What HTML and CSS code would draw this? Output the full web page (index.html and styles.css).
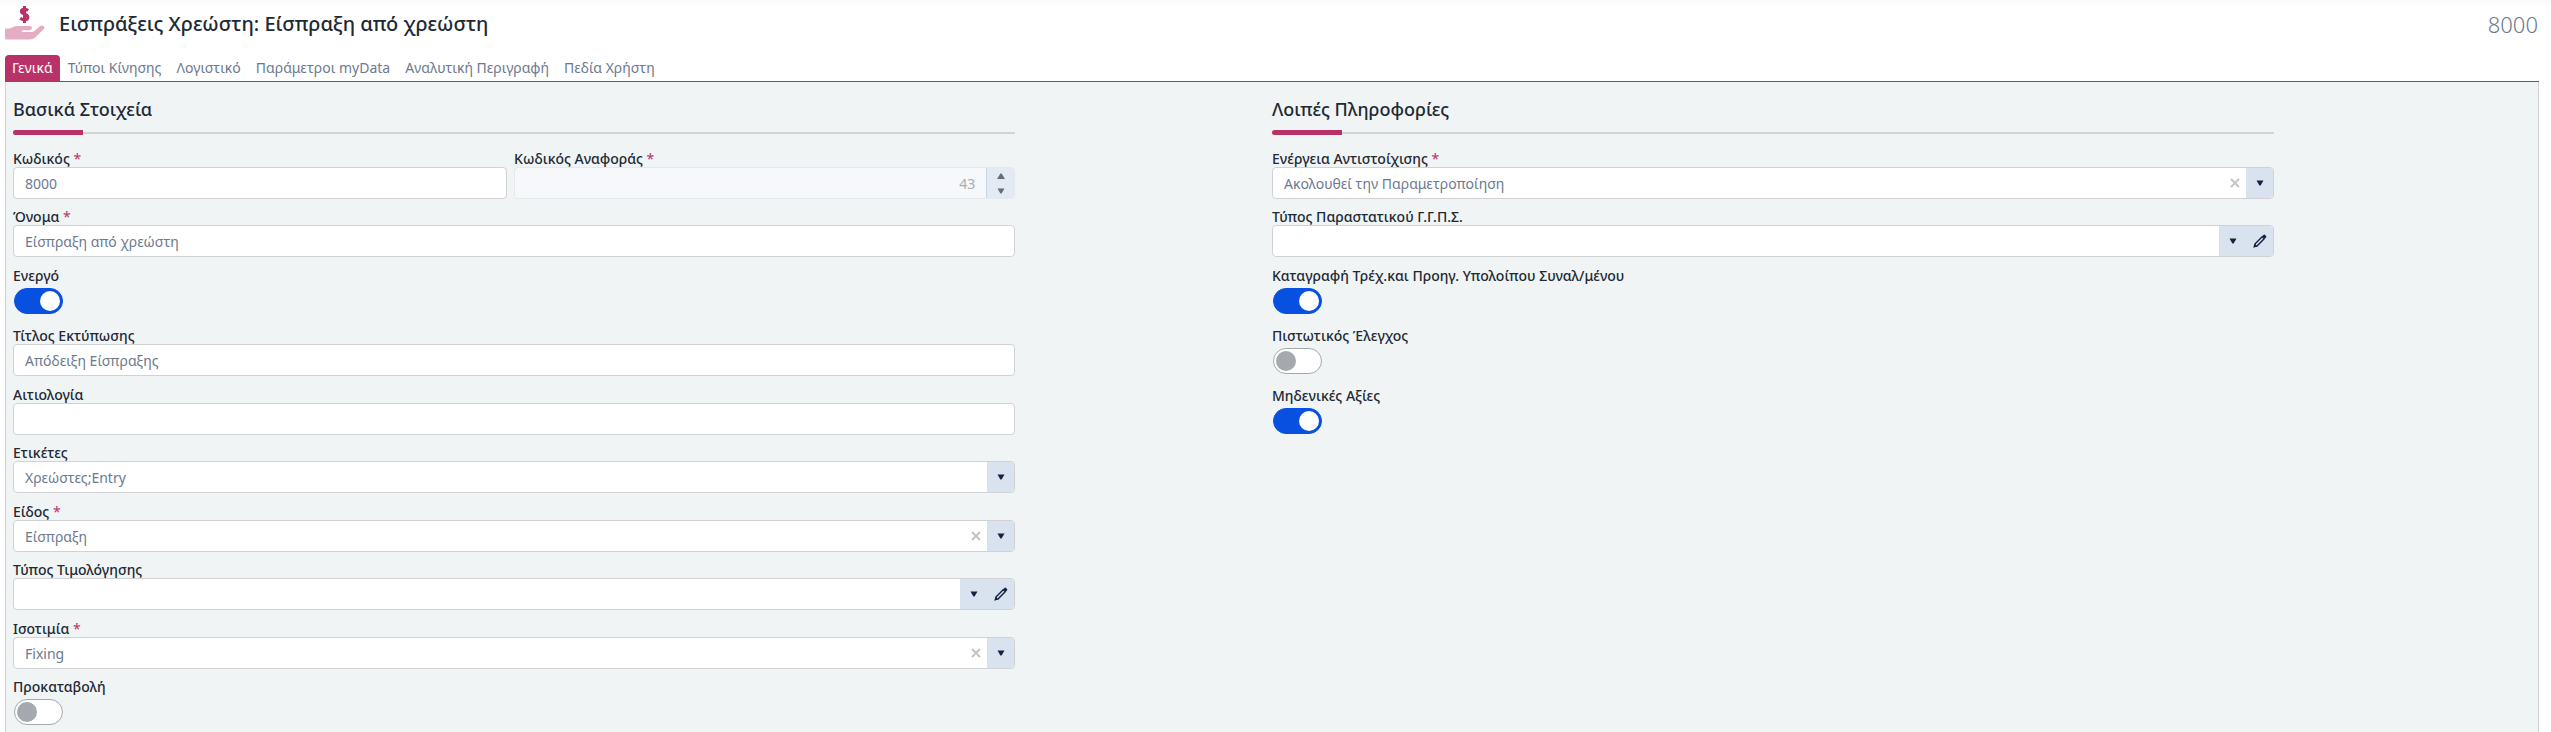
FILE: index.html
```html
<!DOCTYPE html>
<html lang="el">
<head>
  <meta charset="utf-8">
  <meta name="viewport" content="width=device-width, initial-scale=1">
  <title>Εισπράξεις Χρεώστη</title>
  <link rel="stylesheet" href="styles.css">
</head>
<body>

<!-- icon shapes used by the buttons -->
<svg class="sprite" aria-hidden="true">
  <symbol id="i-down" viewBox="0 0 8 6"><path d="M0.5 0.5h7L4.6 5.5H3.4z"/></symbol>
  <symbol id="i-up" viewBox="0 0 8 6"><path d="M0 6h8L4.6 0.4H3.4z"/></symbol>
  <symbol id="i-clear" viewBox="0 0 10 10"><path d="M1 1l8 8M9 1l-8 8" fill="none" stroke="currentColor" stroke-width="2"/></symbol>
  <symbol id="i-pen" viewBox="0 0 14 14">
    <path d="M2.200 9.800l7-7 2 2-7 7-2.800 0.800z" fill="none" stroke="currentColor" stroke-width="1.400"/>
    <path d="M9.200 2.200l1.200-1.200a1.200 1.200 0 0 1 1.700 0l0.900 0.900a1.200 1.200 0 0 1 0 1.700l-1.200 1.200zM0.600 13.400l0.900-4 3.100 3.100z"/>
  </symbol>
</svg>

<header class="header">
  <svg class="logo" viewBox="0 0 40 36" aria-hidden="true">
    <path class="logo-hand" d="M0 22.500h5l3-1.500q2-1 5-1h11.500q2.500 0 2.500 2t-2.500 2.300H18q-1.200 0-1.200 0.900t1.200 0.800h8.500q1.500 0 2.800-1l5.700-4.700q1.800-1.300 3.500-0.200 1.700 1.300 0.300 2.900l-8.600 8.500q-2.200 2-5.200 2H1.500Q0 33.500 0 32z"/>
    <path class="logo-dollar" d="M23.200 4.400q-1.800-1.200-3.900-1.200-2.900 0-2.900 2.200 0 1.600 2.900 2.500 3.600 1 3.600 3.400 0 2.400-3.400 2.400-2.500 0-4.300-1.400M19.500 0v17"/>
  </svg>
  <h1 class="title">Εισπράξεις Χρεώστη: Είσπραξη από χρεώστη</h1>
  <span class="code">8000</span>
</header>

<nav class="tabs">
  <a href="#general" class="tab active">Γενικά</a>
  <a href="#types" class="tab">Τύποι Κίνησης</a>
  <a href="#accounting" class="tab">Λογιστικό</a>
  <a href="#mydata" class="tab">Παράμετροι myData</a>
  <a href="#description" class="tab">Αναλυτική Περιγραφή</a>
  <a href="#userfields" class="tab">Πεδία Χρήστη</a>
</nav>

<main class="panel" id="general">

  <!-- basic data -->
  <section class="section">
    <h2 class="section-title">Βασικά Στοιχεία</h2>
    <div class="fields">
      <div class="field pair">
        <div>
          <label for="code">Κωδικός <span class="req">*</span></label>
          <div class="control"><input type="text" id="code" value="8000"></div>
        </div>
        <div>
          <label for="refcode">Κωδικός Αναφοράς <span class="req">*</span></label>
          <div class="control disabled">
            <input type="number" id="refcode" value="43" disabled>
            <div class="spinner">
              <button type="button" disabled aria-label="Αύξηση"><svg class="arrow"><use href="#i-up"/></svg></button>
              <button type="button" disabled aria-label="Μείωση"><svg class="arrow"><use href="#i-down"/></svg></button>
            </div>
          </div>
        </div>
      </div>
      <div class="field">
        <label for="name">Όνομα <span class="req">*</span></label>
        <div class="control"><input type="text" id="name" value="Είσπραξη από χρεώστη"></div>
      </div>
      <div class="field toggle">
        <label for="active">Ενεργό</label>
        <input type="checkbox" class="switch" id="active" checked>
      </div>
      <div class="field">
        <label for="printtitle">Τίτλος Εκτύπωσης</label>
        <div class="control"><input type="text" id="printtitle" value="Απόδειξη Είσπραξης"></div>
      </div>
      <div class="field">
        <label for="reason">Αιτιολογία</label>
        <div class="control"><input type="text" id="reason"></div>
      </div>
      <div class="field">
        <label for="tags">Ετικέτες</label>
        <div class="control">
          <select id="tags"><option>Χρεώστες;Entry</option></select>
          <button type="button" class="btn" aria-label="Άνοιγμα"><svg class="arrow"><use href="#i-down"/></svg></button>
        </div>
      </div>
      <div class="field">
        <label for="kind">Είδος <span class="req">*</span></label>
        <div class="control">
          <select id="kind"><option>Είσπραξη</option></select>
          <button type="button" class="clear" aria-label="Καθαρισμός"><svg class="cross"><use href="#i-clear"/></svg></button>
          <button type="button" class="btn" aria-label="Άνοιγμα"><svg class="arrow"><use href="#i-down"/></svg></button>
        </div>
      </div>
      <div class="field">
        <label for="pricing">Τύπος Τιμολόγησης</label>
        <div class="control">
          <select id="pricing"><option></option></select>
          <button type="button" class="btn" aria-label="Άνοιγμα"><svg class="arrow"><use href="#i-down"/></svg></button>
          <button type="button" class="btn" aria-label="Επεξεργασία"><svg class="pen"><use href="#i-pen"/></svg></button>
        </div>
      </div>
      <div class="field">
        <label for="rate">Ισοτιμία <span class="req">*</span></label>
        <div class="control">
          <select id="rate"><option>Fixing</option></select>
          <button type="button" class="clear" aria-label="Καθαρισμός"><svg class="cross"><use href="#i-clear"/></svg></button>
          <button type="button" class="btn" aria-label="Άνοιγμα"><svg class="arrow"><use href="#i-down"/></svg></button>
        </div>
      </div>
      <div class="field toggle">
        <label for="advance">Προκαταβολή</label>
        <input type="checkbox" class="switch" id="advance">
      </div>
    </div>
  </section>

  <!-- other information -->
  <section class="section">
    <h2 class="section-title">Λοιπές Πληροφορίες</h2>
    <div class="fields">
      <div class="field">
        <label for="matching">Ενέργεια Αντιστοίχισης <span class="req">*</span></label>
        <div class="control">
          <select id="matching"><option>Ακολουθεί την Παραμετροποίηση</option></select>
          <button type="button" class="clear" aria-label="Καθαρισμός"><svg class="cross"><use href="#i-clear"/></svg></button>
          <button type="button" class="btn" aria-label="Άνοιγμα"><svg class="arrow"><use href="#i-down"/></svg></button>
        </div>
      </div>
      <div class="field">
        <label for="doctype">Τύπος Παραστατικού Γ.Γ.Π.Σ.</label>
        <div class="control">
          <select id="doctype"><option></option></select>
          <button type="button" class="btn" aria-label="Άνοιγμα"><svg class="arrow"><use href="#i-down"/></svg></button>
          <button type="button" class="btn" aria-label="Επεξεργασία"><svg class="pen"><use href="#i-pen"/></svg></button>
        </div>
      </div>
      <div class="field toggle">
        <label for="balance">Καταγραφή Τρέχ.και Προηγ. Υπολοίπου Συναλ/μένου</label>
        <input type="checkbox" class="switch" id="balance" checked>
      </div>
      <div class="field toggle">
        <label for="credit">Πιστωτικός Έλεγχος</label>
        <input type="checkbox" class="switch" id="credit">
      </div>
      <div class="field toggle">
        <label for="zero">Μηδενικές Αξίες</label>
        <input type="checkbox" class="switch" id="zero" checked>
      </div>
    </div>
  </section>

</main>

</body>
</html>
```
FILE: styles.css
```css
* {
  box-sizing: border-box;
}

body {
  margin: 0;
  min-height: 100vh;
  padding: 0 12px 0 5px;
  display: flex;
  flex-direction: column;
  background: linear-gradient(#fafafa, #fff 8px);
  font-family: "Noto Sans", "Open Sans", sans-serif;
  font-size: 14px;
  color: #212934;
}

.sprite {
  display: none;
}

/* header */
.header {
  display: flex;
  align-items: center;
  height: 55px;
  padding: 0 1px 8px 0;
}

.logo {
  width: 40px;
  height: 36px;
}

.logo-hand {
  fill: #e4adc4;
}

.logo-dollar {
  fill: none;
  stroke: #b83268;
  stroke-width: 3;
}

.title {
  flex: 1;
  margin: 0 0 0 14px;
  font-size: 20px;
  font-weight: 500;
}

.code {
  font-size: 22px;
  font-weight: 300;
  color: #6c7a90;
}

/* tabs */
.tabs {
  display: flex;
  gap: 1px;
  border-bottom: 1px solid #b83268;
}

.tab {
  padding: 0 7px;
  line-height: 26px;
  color: #6c7a90;
  text-decoration: none;
}

.tab.active {
  border-radius: 4px 4px 0 0;
  background: #b83268;
  color: #fff;
}

/* panel */
.panel {
  flex: 1;
  display: grid;
  grid-template-columns: 1fr 1fr;
  padding: 0 7px;
  border: 1px solid #d0d3d4;
  border-width: 0 1px;
  background: #f0f4f5;
}

.section {
  width: calc(80% - 5px);
}

.section-title {
  display: flex;
  flex-direction: column;
  margin: 14px 0;
  font-size: 18px;
  font-weight: 500;
  line-height: 26px;
}

/* rule with the short coloured bar on its left end */
.section-title::after {
  content: "";
  height: 5px;
  margin-top: 8px;
  background:
    radial-gradient(#b83268, #b83268) left / 70px 5px no-repeat,
    linear-gradient(#d3d3d3, #d3d3d3) left / 100% 2px no-repeat;
  border-radius: 3px 0 0 3px;
}

/* fields */
.field {
  margin-bottom: 8px;
}

.field:nth-child(even) {
  margin-bottom: 9px;
}

.field label {
  display: block;
  width: fit-content;
  height: 18px;
  font-weight: 500;
  line-height: 20px;
}

.req {
  font-weight: 400;
  color: #b83268;
}

.pair {
  display: grid;
  grid-template-columns: 1fr 1fr;
}

.pair > :first-child {
  margin-right: 7px;
}

.control {
  display: flex;
  height: 32px;
  border: 1px solid #d0d2d3;
  border-radius: 4px;
  background: #fff;
  overflow: hidden;
}

.control input,
.control select {
  flex: 1;
  min-width: 0;
  margin: 0;
  padding: 0 11px;
  border: 0;
  background: none;
  color: #6c7a90;
  font: inherit;
  appearance: none;
}

.control input[type="number"] {
  appearance: textfield;
  text-align: right;
}

.control input::-webkit-inner-spin-button {
  display: none;
}

.control:focus-within {
  border-color: #0850e0;
}

.control input:focus,
.control select:focus {
  outline: none;
}

.control button {
  display: flex;
  align-items: center;
  justify-content: center;
  padding: 0;
  border: 0;
  color: #14233f;
}

.control .btn {
  width: 27px;
  background: #d9e3ef;
}

.control .clear {
  width: 22px;
  background: none;
  color: #c4c4c4;
}

.arrow {
  width: 8px;
  height: 6px;
  fill: currentColor;
}

.cross {
  width: 10px;
  height: 10px;
}

.pen {
  width: 14px;
  height: 14px;
  fill: currentColor;
}

.disabled {
  border-color: #e5e9ec;
  background: #f6f8fb;
}

.disabled input {
  color: #a7adb8;
}

.spinner {
  display: flex;
  flex-direction: column;
  width: 28px;
  border-left: 1px solid #c8d6e6;
  background: #e3eaf2;
}

.spinner button {
  flex: 1;
  background: none;
  color: #626e7c;
}

/* switches */
.toggle,
.toggle:nth-child(even) {
  margin-bottom: 12px;
}

.toggle label {
  height: 22px;
}

.field:last-child {
  margin-bottom: 0;
}

.switch {
  display: block;
  width: 49px;
  height: 26px;
  margin: 0 1px;
  padding: 2px;
  border: 1px solid #a5a8ad;
  border-radius: 13px;
  background: #fff;
  appearance: none;
}

.switch::before {
  content: "";
  display: block;
  width: 20px;
  height: 20px;
  border-radius: 50%;
  background: #a5a8ad;
}

.switch:checked {
  border-color: #0850e0;
  background: #0850e0;
}

.switch:checked::before {
  margin-left: auto;
  background: #fff;
}
```
